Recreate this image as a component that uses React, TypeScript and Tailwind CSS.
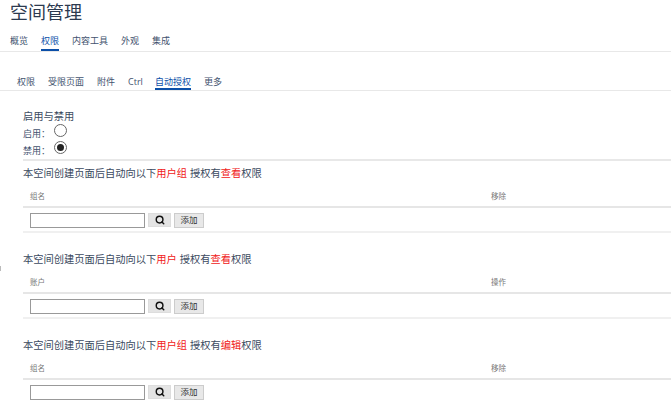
import { Search } from "lucide-react";

const FONT = "font-['Open_Sans','Noto_Sans_CJK_SC',sans-serif]";

const mainTabs = ["概览", "权限", "内容工具", "外观", "集成"];
const subTabs = ["权限", "受限页面", "附件", "Ctrl", "自动授权", "更多"];

function TabBar({ tabs, active, className }: { tabs: string[]; active: string; className: string }) {
  return (
    <div className={`flex gap-[13px] border-b border-[#e8e8e8] text-[9px] text-[#42526e] ${className}`}>
      {tabs.map((t) => (
        <div
          key={t}
          className={t === active ? "h-full border-b-2 border-[#0b4fa8] text-[#0b4fa8]" : t === "Ctrl" ? "h-full w-[14px]" : "h-full"}
        >
          {t}
        </div>
      ))}
    </div>
  );
}

function GrantTable({
  who,
  what,
  col,
  action,
}: {
  who: string;
  what: string;
  col: string;
  action: string;
}) {
  return (
    <div className="h-[86px]">
      <div className="flex h-[24px] items-center text-[10.25px] leading-none text-[#3b4a60]">
        本空间创建页面后自动向以下<span className="text-[#f02020]">{who}</span>
        <span className="ml-[3px]">授权有</span>
        <span className="text-[#f02020]">{what}</span>权限
      </div>
      <div className="flex h-[23px] items-center border-b-2 border-[#e6e6e6] pt-[3px] text-[7.5px] text-[#777]">
        <div className="w-[468px] pl-[7px]">{col}</div>
        <div>{action}</div>
      </div>
      <div className="flex h-[25px] items-center gap-[3px] border-b-2 border-[#f0f0f0] pl-[7px] pt-[1px]">
        <input className="h-[15px] w-[115px] border border-[#999] bg-white" />
        <button className="flex h-[14px] w-[23px] items-center justify-center border border-[#ddd] bg-[#e4e4e4] text-[#111]">
          <Search size={10} strokeWidth={3.5} />
        </button>
        <button className="flex h-[15px] w-[30px] items-center justify-center border border-[#ccc] bg-[#e8e8e8] text-[8.5px] text-[#333]">
          添加
        </button>
      </div>
    </div>
  );
}

export default function App() {
  return (
    <div className={`relative h-[400px] w-[671px] overflow-hidden bg-white ${FONT}`}>
      <div className="h-[29px] pl-[10px] pt-[1px] text-[18px] leading-[22px] text-[#2c3a4f]">空间管理</div>

      <TabBar tabs={mainTabs} active="权限" className="h-[23px] items-start pl-[10px] pt-[5px]" />

      <TabBar
        tabs={subTabs}
        active="自动授权"
        className="mt-[22px] h-[17px] items-start pl-[17px] pt-[1px]"
      />

      <div className="pl-[23px] pt-[18px]">
        <div className="h-[15px] text-[10.25px] leading-[15px] text-[#3b4a60]">启用与禁用</div>
        <div className="flex h-[17px] items-center text-[9px] text-[#42526e]">
          <span className="pt-[3px]">启用：</span>
          <span className="mb-[5px] ml-[4px] size-[13px] rounded-full border border-[#666] bg-white" />
        </div>
        <div className="flex h-[17px] items-center text-[9px] text-[#42526e]">
          <span className="pt-[3px]">禁用：</span>
          <span className="mb-[5px] ml-[4px] flex size-[13px] items-center justify-center rounded-full border border-[#666] bg-white">
            <span className="size-[7px] rounded-full bg-[#222]" />
          </span>
        </div>
        <div className="mt-[1px] border-t-2 border-[#e8e8e8]">
          <GrantTable who="用户组" what="查看" col="组名" action="移除" />
          <GrantTable who="用户" what="查看" col="账户" action="操作" />
          <GrantTable who="用户组" what="编辑" col="组名" action="移除" />
        </div>
      </div>

      <div className="absolute left-0 top-[266px] h-[5px] w-px bg-[#bbb]" />
    </div>
  );
}
